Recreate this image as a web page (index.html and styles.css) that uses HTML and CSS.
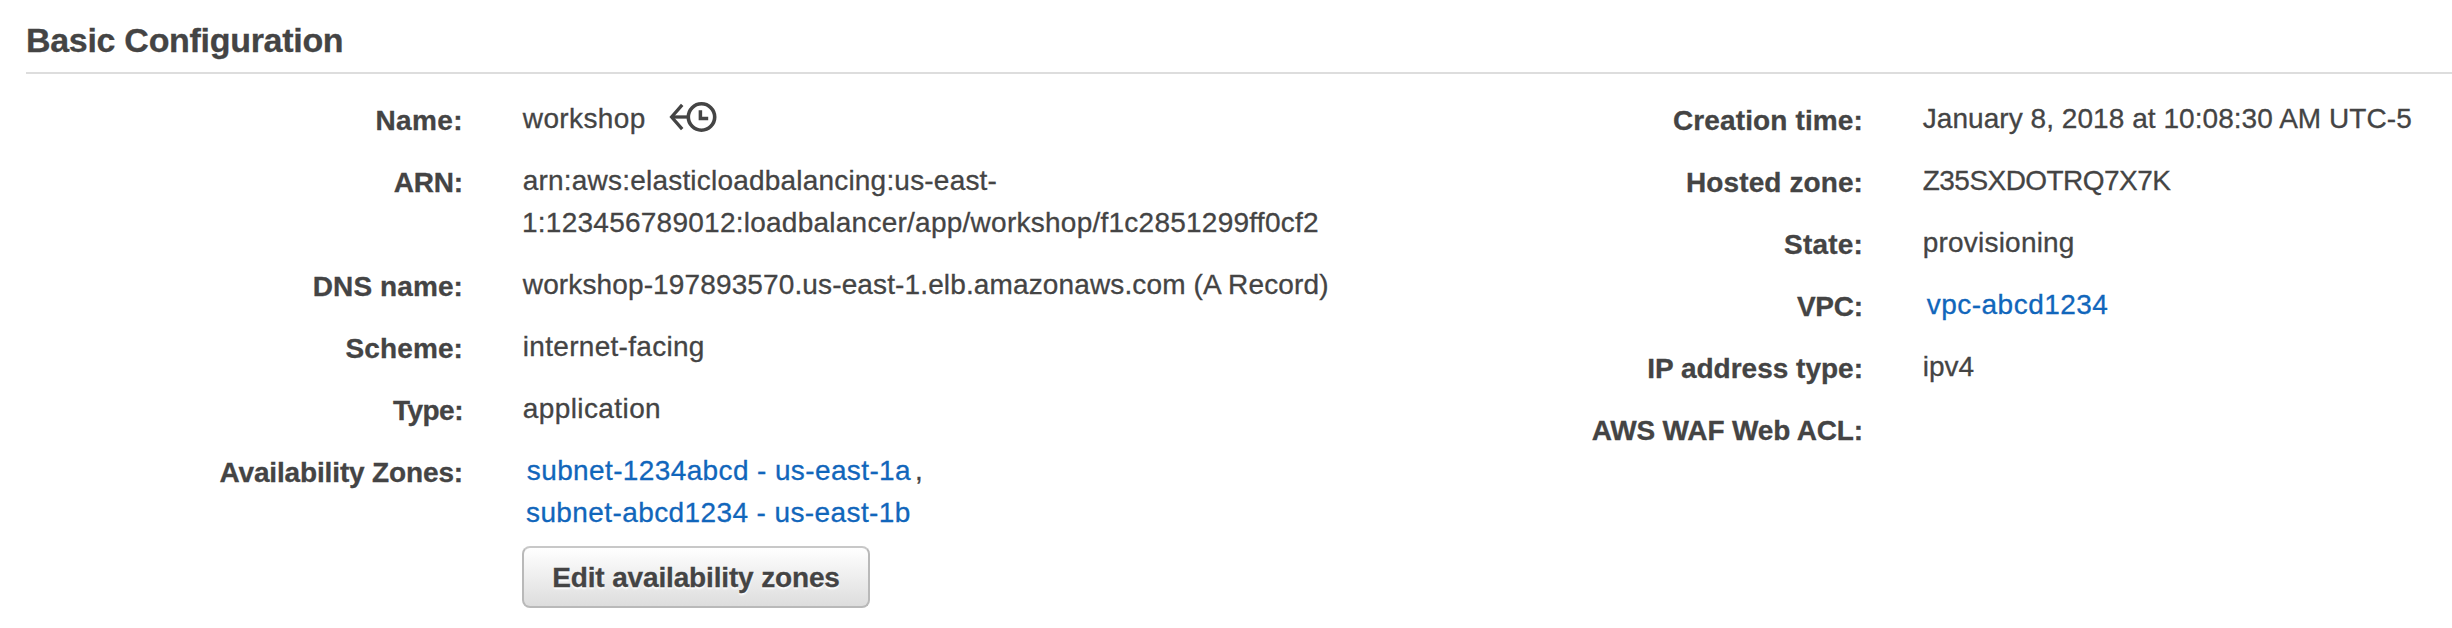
FILE: index.html
```
<!DOCTYPE html>
<html lang="en">
<head>
<meta charset="utf-8">
<title>Basic Configuration</title>
<link rel="stylesheet" href="styles.css">
</head>
<body>
<section class="panel">
  <h2 class="panel-title">Basic Configuration</h2>
  <div class="columns">
    <dl class="details">
      <dt class="ls-p4">Name:</dt>
      <dd class="name"><span class="ls-p35">workshop</span>
        <svg class="history" width="50" height="32" viewBox="0 0 50 32" fill="none" stroke="#444" stroke-width="3.3">
          <circle cx="33.5" cy="16" r="13.2" stroke-width="3.6"/>
          <path d="M32.4 9.2V17.6H40.2" stroke-width="3.5"/>
          <path d="M3 16H20"/>
          <path d="M14.2 3.8L3.6 16L14.2 28.2"/>
        </svg>
      </dd>
      <dt class="ls-m2">ARN:</dt>
      <dd><span class="ls-p2">arn:aws:elasticloadbalancing:us-east-</span><br><span class="ls-p25">1:123456789012:loadbalancer/app/workshop/f1c2851299ff0cf2</span></dd>
      <dt class="ls-p1">DNS name:</dt>
      <dd class="ls-p15">workshop-197893570.us-east-1.elb.amazonaws.com (A Record)</dd>
      <dt class="ls-p1">Scheme:</dt>
      <dd class="ls-p3">internet-facing</dd>
      <dt class="ls-m5">Type:</dt>
      <dd class="ls-p4">application</dd>
      <dt class="ls-m15">Availability Zones:</dt>
      <dd><a class="link ls-p35">subnet-1234abcd - us-east-1a</a>,<br><a class="link ls-p4">subnet-abcd1234 - us-east-1b</a><button class="button ls-m15" type="button">Edit availability zones</button></dd>
    </dl>
    <dl class="details">
      <dt class="ls-p15">Creation time:</dt>
      <dd class="ls-p05">January 8, 2018 at 10:08:30 AM UTC-5</dd>
      <dt class="ls-p1">Hosted zone:</dt>
      <dd class="ls-m6">Z35SXDOTRQ7X7K</dd>
      <dt class="ls-p2">State:</dt>
      <dd class="ls-p2">provisioning</dd>
      <dt class="ls-m2">VPC:</dt>
      <dd><a class="link ls-p45">vpc-abcd1234</a></dd>
      <dt>IP address type:</dt>
      <dd>ipv4</dd>
      <dt class="ls-m15">AWS WAF Web ACL:</dt>
      <dd></dd>
    </dl>
  </div>
</section>
</body>
</html>
```

FILE: styles.css
```
body {
  margin: 0;
  background: #fff;
  color: #444;
  font: 28px/42px "Liberation Sans", Arial, sans-serif;
  -webkit-text-stroke: 0.3px currentColor;
}

.panel {
  padding: 19px 0 0 26px;
}

.panel-title {
  margin: 0;
  height: 53px;
  border-bottom: 2px solid #ddd;
  font-size: 34px;
  line-height: 42px;
  letter-spacing: -0.3px;
}

.columns {
  display: grid;
  grid-template-columns: 1400px 1fr;
  padding-top: 24px;
}

.details {
  display: grid;
  grid-template-columns: 437px 1fr;
  column-gap: 59px;
  row-gap: 20px;
  align-content: start;
  margin: 0;
  white-space: nowrap;
}

.details dt {
  padding-top: 2px;
  height: 40px;
  font-weight: bold;
  text-align: right;
}

.details dd {
  margin: 0;
  min-height: 42px;
  text-indent: 0.8px;
}

.name {
  display: flex;
  gap: 22px;
}

.history {
  margin-top: 3px;
}

.link {
  padding: 0 4px;
  color: #1166bb;
}

.button {
  display: block;
  box-sizing: border-box;
  width: 348px;
  height: 62px;
  margin-top: 12px;
  padding: 2px 0 0;
  border: 2px solid #b9b9b9;
  border-top-color: #c8c8c8;
  border-radius: 8px;
  background: linear-gradient(#fff, #ddd);
  color: #444;
  font: bold 28px/56px "Liberation Sans", Arial, sans-serif;
  text-shadow: 0 2px 2px #fff;
}

/* Tracking adjustments */
.ls-m6 { letter-spacing: -0.55px; }
.ls-m5 { letter-spacing: -0.5px; }
.ls-m2 { letter-spacing: -0.2px; }
.ls-m15 { letter-spacing: -0.15px; }
.ls-p05 { letter-spacing: 0.05px; }
.ls-p1 { letter-spacing: 0.1px; }
.ls-p15 { letter-spacing: 0.13px; }
.ls-p2 { letter-spacing: 0.2px; }
.ls-p25 { letter-spacing: 0.25px; }
.ls-p3 { letter-spacing: 0.3px; }
.ls-p35 { letter-spacing: 0.38px; }
.ls-p4 { letter-spacing: 0.4px; }
.ls-p45 { letter-spacing: 0.47px; }
```
